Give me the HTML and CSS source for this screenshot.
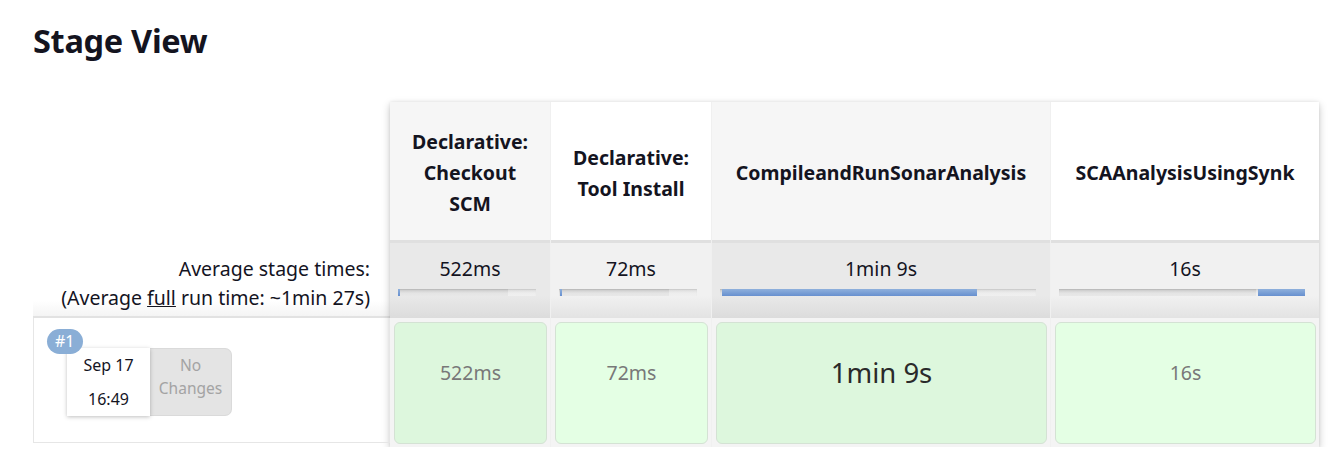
FILE: index.html
```html
<!DOCTYPE html>
<html>
<head>
<meta charset="utf-8">
<link rel="stylesheet" href="styles.css">
</head>
<body>
<div class="page">
  <h1 class="title">Stage View</h1>
  <div class="view">
    <div class="left">
      <div class="left-head"></div>
      <div class="left-avg">
        <div>Average stage times:</div>
        <div>(Average <u>full</u> run time: ~1min 27s)</div>
      </div>
      <div class="left-run">
        <span class="badge">#1</span>
        <div class="run-info">
          <div class="date"><div>Sep 17</div><div>16:49</div></div>
          <div class="changes">No<br>Changes</div>
        </div>
      </div>
    </div>
    <div class="stages">
      <div class="head odd"><span>Declarative: Checkout SCM</span></div>
      <div class="head even"><span>Declarative: Tool Install</span></div>
      <div class="head odd"><span>CompileandRunSonarAnalysis</span></div>
      <div class="head even"><span>SCAAnalysisUsingSynk</span></div>

      <div class="avg odd">
        <div class="avg-time">522ms</div>
        <div class="bar"><div class="fill" style="margin-left:0%;width:1%"></div></div>
      </div>
      <div class="avg even">
        <div class="avg-time">72ms</div>
        <div class="bar"><div class="fill" style="margin-left:1%;width:1%"></div></div>
      </div>
      <div class="avg odd">
        <div class="avg-time">1min 9s</div>
        <div class="bar"><div class="fill" style="margin-left:0.6%;width:80.6%"></div></div>
      </div>
      <div class="avg even">
        <div class="avg-time">16s</div>
        <div class="bar"><div class="fill" style="margin-left:81%;width:19%"></div></div>
      </div>

      <div class="run odd"><div class="cell">522ms</div></div>
      <div class="run even"><div class="cell">72ms</div></div>
      <div class="run odd"><div class="cell big">1min 9s</div></div>
      <div class="run even"><div class="cell">16s</div></div>
    </div>
  </div>
</div>
</body>
</html>
```
FILE: styles.css
```css
html, body {
  margin: 0;
  padding: 0;
  background: #fff;
}
body {
  font-family: "Noto Sans", "Open Sans", sans-serif;
  color: #14141f;
}
.page {
  padding: 19px 0 0 33px;
}
.title {
  margin: 0;
  font-size: 32.5px;
  font-weight: 700;
  line-height: 44px;
  letter-spacing: -0.3px;
}
.view {
  display: flex;
  margin-top: 39px;
}
.left {
  width: 357px;
  display: flex;
  flex-direction: column;
}
.left-head {
  height: 138px;
}
.left-avg {
  height: 78px;
  box-sizing: border-box;
  text-align: right;
  padding: 14px 20px 0 0;
  font-size: 19.5px;
  line-height: 29px;
  color: #14141f;
  border-bottom: 2px solid #e2e2e2;
  background: linear-gradient(#fff 0%, #fff 80%, #f4f4f4 100%);
}
.left-run {
  position: relative;
  height: 125px;
  box-sizing: border-box;
  border: 1px solid #e6e6e6;
  border-top: none;
  padding: 30px 0 0 33px;
}
.badge {
  position: absolute;
  left: 13px;
  top: 11px;
  z-index: 2;
  background: #8aaed6;
  color: #fff;
  font-size: 16px;
  line-height: 25px;
  padding: 0 8px;
  border-radius: 13px;
}
.run-info {
  display: flex;
  align-items: flex-start;
}
.date {
  width: 83px;
  height: 68px;
  background: #fff;
  box-shadow: 0 1px 4px rgba(0,0,0,.25);
  text-align: center;
  font-size: 16px;
  line-height: 34px;
  position: relative;
  z-index: 1;
}
.changes {
  width: 82px;
  height: 68px;
  box-sizing: border-box;
  background: #e4e4e4;
  border: 1px solid #dadada;
  border-left: none;
  border-radius: 0 7px 7px 0;
  color: #a3a3a3;
  text-align: center;
  font-size: 15.5px;
  line-height: 23px;
  padding-top: 5px;
}
.stages {
  display: grid;
  grid-template-columns: 160px 160px 338px 268px;
  grid-template-rows: 138px 78px 129px;
  column-gap: 1px;
  background: #f0f0f0;
  box-shadow: 0 3px 8px rgba(0,0,0,.22), 0 0 3px rgba(0,0,0,.08);
}
.head {
  display: flex;
  align-items: center;
  justify-content: center;
  text-align: center;
  font-weight: 700;
  font-size: 19.5px;
  line-height: 31px;
  padding: 3px 12px 0;
}
.head.odd { background: #f6f6f6; }
.head.even { background: #fff; }
.avg {
  box-sizing: border-box;
  border-top: 3px solid #e0e0e0;
  padding: 12px 14px 0 8px;
  text-align: center;
  font-size: 19.5px;
}
.avg.odd { background: linear-gradient(#e9e9e9 0%, #e9e9e9 70%, #dcdcdc 100%); }
.avg.even { background: linear-gradient(#f1f1f1 0%, #f1f1f1 70%, #e3e3e3 100%); }
.avg-time {
  line-height: 28px;
  height: 32px;
  padding-left: 6px;
}
.bar {
  height: 7px;
  display: flex;
  margin-top: 2px;
  background: linear-gradient(90deg, rgba(0,0,0,0) 0%, rgba(0,0,0,0) 80%, rgba(255,255,255,.35) 80%, rgba(255,255,255,.35) 100%),
              linear-gradient(#c8c8c8, #e4e4e4 60%, #e8e8e8);
  box-shadow: inset 0 1px 1px rgba(0,0,0,.08);
}
.fill {
  height: 7px;
  min-width: 2px;
  background: linear-gradient(#8fb0dc, #6790cf);
}
.run {
  padding: 4px 3px 3px 4px;
  background: #f4f4f4;
}
.cell {
  height: 100%;
  box-sizing: border-box;
  border: 1px solid #d4e2d4;
  border-radius: 6px;
  display: flex;
  align-items: flex-start;
  justify-content: center;
  padding-top: 34px;
  font-size: 19.5px;
  line-height: 32px;
  color: #787878;
}
.run.odd .cell { background: #ddf7dd; }
.run.even .cell { background: #e4ffe4; }
.cell.big {
  font-size: 27.5px;
  color: #2a2a2a;
}
```
